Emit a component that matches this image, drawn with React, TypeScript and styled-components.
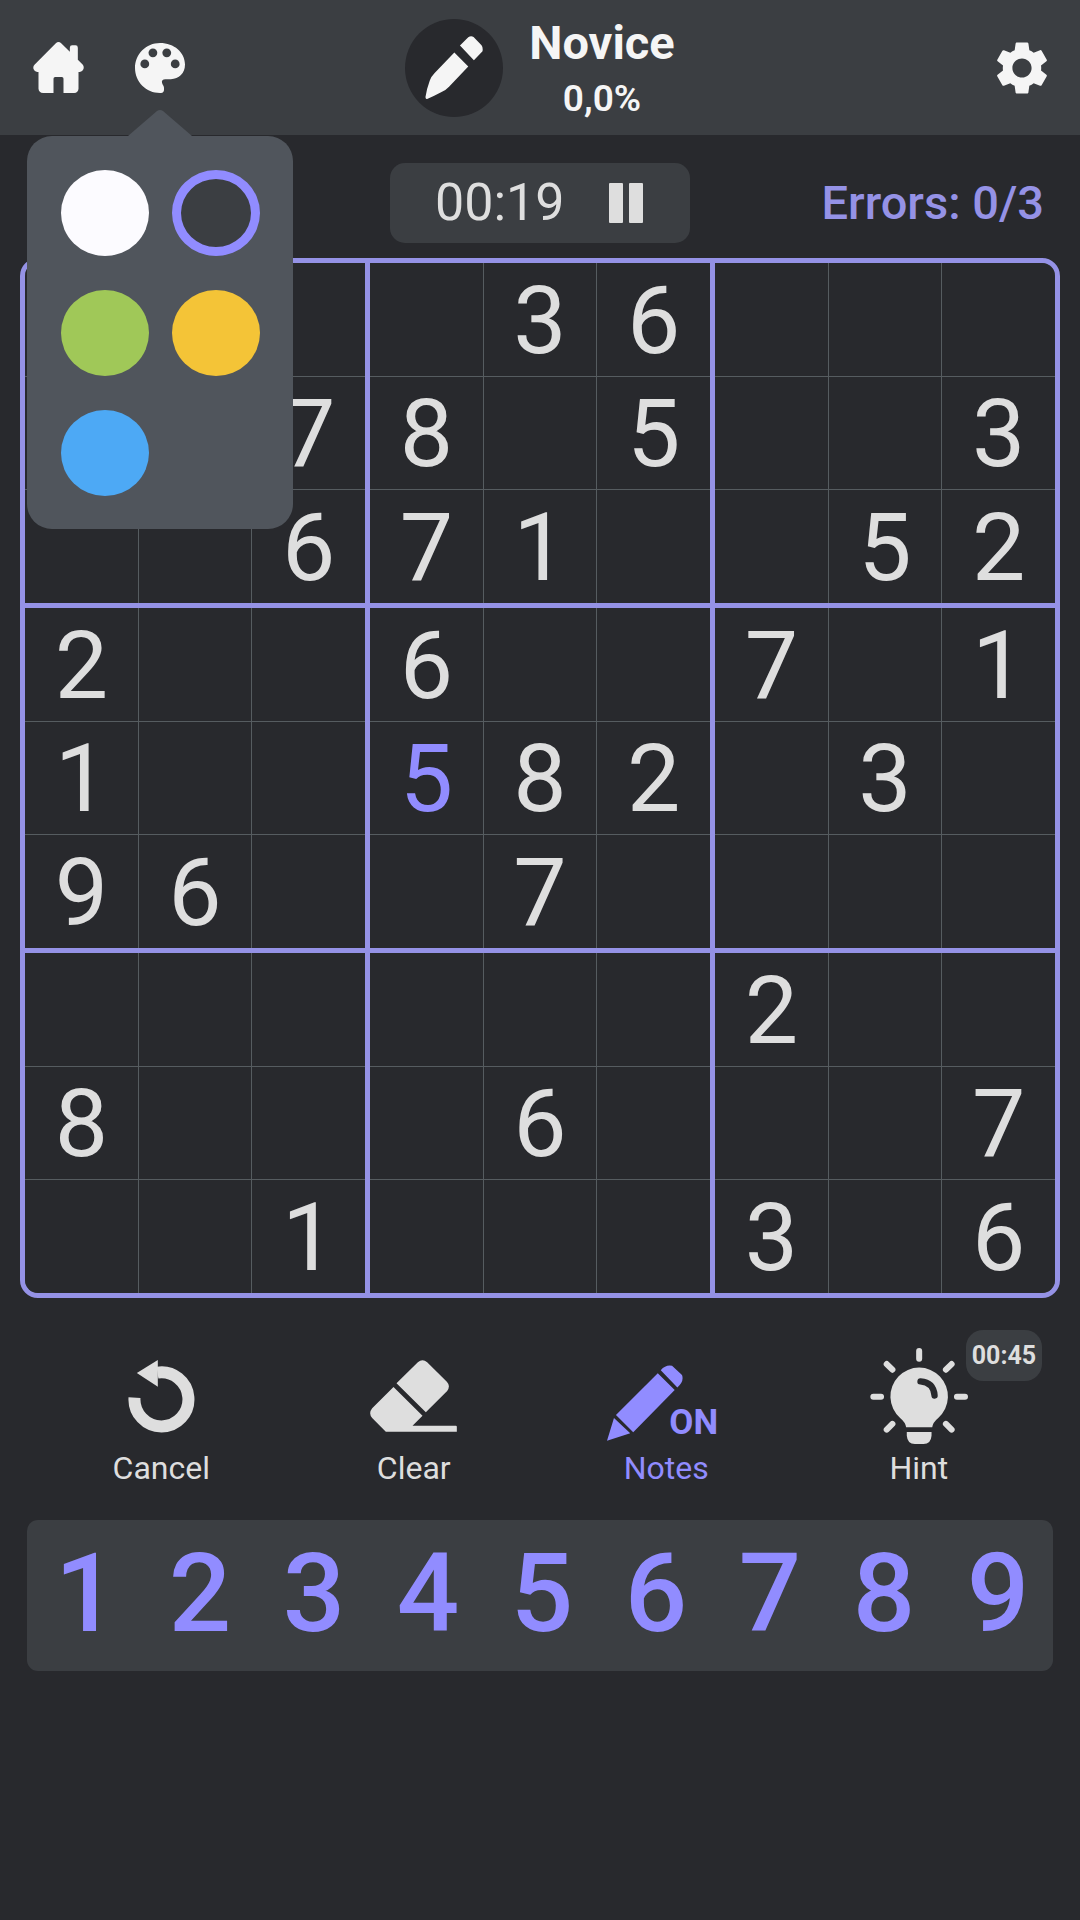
import React, { useState } from "react";
import styled, { createGlobalStyle } from "styled-components";
import { MdSettings } from "react-icons/md";

const color = {
  page: "#28292d",
  panel: "#3b3e42",
  popover: "#50555c",
  line: "#565c60",
  frame: "#9592e6",
  accent: "#918cff",
  text: "#dedede",
  bright: "#f5f5f5",
};

const GlobalStyle = createGlobalStyle`
  * { box-sizing: border-box; }
  html, body, #root { min-height: 100%; }
  body {
    margin: 0;
    background: ${color.page};
    color: ${color.text};
    font-family: Roboto, "Noto Sans", sans-serif;
  }
  button {
    margin: 0;
    padding: 0;
    border: 0;
    background: none;
    color: inherit;
    font: inherit;
    cursor: pointer;
  }
  svg { display: block; }
`;

const Header = styled.header`
  display: grid;
  grid-template-columns: 1fr auto 1fr;
  align-items: center;
  min-height: 135px;
  background: ${color.panel};
`;

const NavGroup = styled.nav`
  display: flex;
  align-items: center;
  gap: 51px;
  padding-left: 33px;
`;

const IconButton = styled.button`
  display: flex;
  align-items: center;
  justify-content: center;
  color: ${color.bright};
`;

const SettingsButton = styled(IconButton)`
  justify-self: end;
  margin-right: 26px;
`;

const ThemeMenu = styled.div`
  position: relative;
`;

const Popover = styled.div`
  position: absolute;
  z-index: 2;
  top: 93px;
  left: 50%;
  transform: translateX(-50%);
  display: grid;
  grid-template-columns: 88px 88px;
  gap: 34px 23px;
  width: 266px;
  padding: 34px 33px 33px 34px;
  border-radius: 25px;
  background: ${color.popover};
`;

const PopoverArrow = styled.svg`
  position: absolute;
  bottom: 100%;
  left: 50%;
  transform: translateX(-50%);
`;

const Swatch = styled.input<{ $fill: string }>`
  appearance: none;
  width: 88px;
  height: 86px;
  margin: 0;
  border-radius: 50%;
  background: ${(p) => p.$fill};
  cursor: pointer;

  &:checked {
    border: 9px solid ${color.accent};
  }
`;

const Level = styled.div`
  display: flex;
  align-items: center;
  gap: 26px;
`;

const LevelBadge = styled.div`
  display: flex;
  align-items: center;
  justify-content: center;
  width: 98px;
  height: 98px;
  border-radius: 50%;
  background: ${color.page};
  color: ${color.bright};
`;

const LevelText = styled.div`
  display: flex;
  flex-direction: column;
  align-items: center;
  padding-top: 7px;
  color: ${color.bright};
`;

const LevelName = styled.h1`
  margin: 0;
  font-size: 47px;
  line-height: 56px;
  font-weight: 700;
`;

const LevelProgress = styled.span`
  font-size: 37px;
  line-height: 56px;
  font-weight: 600;
`;

const Main = styled.main`
  padding: 28px 20px;
`;

const StatusRow = styled.div`
  display: grid;
  grid-template-columns: 1fr auto 1fr;
  align-items: center;
  padding: 0 16px;
`;

const TimerButton = styled.button`
  grid-column: 2;
  display: flex;
  align-items: center;
  justify-content: space-between;
  width: 300px;
  height: 80px;
  padding: 0 47px 0 45px;
  border-radius: 15px;
  background: ${color.panel};
`;

const TimerText = styled.span`
  font-size: 52px;
  line-height: 80px;
`;

const ErrorCount = styled.span`
  justify-self: end;
  color: ${color.frame};
  font-size: 47px;
  line-height: 80px;
  font-weight: 500;
`;

const Board = styled.section`
  display: grid;
  grid-template: repeat(3, 1fr) / repeat(3, 1fr);
  gap: 5px;
  aspect-ratio: 1;
  margin-top: 15px;
  overflow: hidden;
  border: 5px solid ${color.frame};
  border-radius: 18px;
  background: ${color.frame};
`;

const Box = styled.div`
  display: grid;
  grid-template: repeat(3, 1fr) / repeat(3, 1fr);
  gap: 1px;
  background: ${color.line};
`;

const Cell = styled.button<{ $entered?: boolean }>`
  padding-top: 3px;
  background: ${color.page};
  color: ${(p) => (p.$entered ? color.accent : color.text)};
  font-size: 95px;
  line-height: 104px;
`;

const Tools = styled.div`
  display: grid;
  grid-template-columns: repeat(4, 1fr);
  margin-top: 50px;
  padding: 0 15px;
`;

const Tool = styled.button<{ $active?: boolean }>`
  display: flex;
  flex-direction: column;
  align-items: center;
  color: ${(p) => (p.$active ? color.accent : color.text)};
  font-size: 32px;
  line-height: 48px;
`;

const ToolIcon = styled.span`
  position: relative;
  display: flex;
  align-items: center;
  justify-content: center;
  height: 96px;
`;

const NotesIcon = styled(ToolIcon)`
  align-items: flex-end;
  padding: 0 7px 3px 0;
`;

const NotesState = styled.span`
  margin-left: -14px;
  font-size: 35px;
  line-height: 36px;
  font-weight: 700;
`;

const HintTimer = styled.span`
  position: absolute;
  top: -18px;
  left: 96px;
  padding: 0 6px;
  border-radius: 17px;
  background: ${color.panel};
  font-size: 25px;
  line-height: 51px;
  font-weight: 700;
`;

const NumberPad = styled.div`
  display: grid;
  grid-template-columns: repeat(9, 1fr);
  margin: 28px 7px 0;
  border-radius: 11px;
  background: ${color.panel};
`;

const NumberKey = styled.button`
  padding: 0 0 3px 4px;
  color: ${color.accent};
  font-size: 110px;
  line-height: 148px;
  font-weight: 500;
`;

const HomeIcon = () => (
  <svg width="51" height="51" viewBox="0 0 152 153" fill="currentColor" aria-hidden="true">
    <path d="M68 4Q76-4 84 4L110 29V17Q110 10 117 10H127Q134 10 134 17V53L149 68Q153 73 151 81Q148 89 140 90H136V140Q135 152 123 153H91V110Q91 105 86 105H66Q61 105 61 110V153H30Q17 152 16 140V90H12Q4 89 1 81Q-1 73 4 68Z" />
  </svg>
);

const PaletteIcon = () => (
  <svg width="50" height="50" viewBox="0 0 148 148" aria-hidden="true">
    <path
      fill="currentColor"
      d="M74 0C116 0 148 28 148 64C148 90 130 107 106 107H90C82 107 78 112 80 118C81 124 87 127 86 136C86 143 84 148 74 148C33 148 0 115 0 74C0 33 33 0 74 0Z"
    />
    <g fill={color.panel}>
      <circle cx="29" cy="62" r="13" />
      <circle cx="53" cy="29" r="13" />
      <circle cx="94" cy="29" r="13" />
      <circle cx="119" cy="62" r="13" />
    </g>
  </svg>
);

const MarkerIcon = () => (
  <svg width="58" height="63" viewBox="0 0 174 190" fill="currentColor" aria-hidden="true">
    <path d="M88 50L130 92L72 153Q62 164 48 170Q28 181 6 190Q1 191 1 184Q5 158 14 134Q18 122 28 112ZM105 29L130 4Q138-2 146 3L170 28Q175 34 173 46L147 73Z" />
  </svg>
);

const PauseIcon = () => (
  <svg width="34" height="40" viewBox="0 0 34 40" fill="currentColor" aria-hidden="true">
    <rect width="14" height="40" rx="1" />
    <rect x="20" width="14" height="40" rx="1" />
  </svg>
);

const CancelIcon = () => (
  <svg width="67" height="73" viewBox="0 0 200 219" aria-hidden="true">
    <path d="M19 113A81 81 0 1 0 88 38" fill="none" stroke="currentColor" strokeWidth="36" />
    <path d="M89 0L26 39L89 80Z" fill="currentColor" />
  </svg>
);

const EraserIcon = () => (
  <svg width="87" height="72" viewBox="0 0 260 216" fill="currentColor" aria-hidden="true">
    <path d="M79 70L143 7Q157-6 171 7L230 65Q242 78 231 93L167 157ZM70 81L157 167L127 197H257Q260 197 260 200V215H47L6 174Q-6 160 6 145Z" />
  </svg>
);

const PencilIcon = () => (
  <svg width="76" height="76" viewBox="0 0 229 228" fill="currentColor" aria-hidden="true">
    <path d="M162 15Q177-2 196 2L226 30Q233 48 212 67ZM153 24L204 75L79 202L27 150ZM21 159L70 205L0 228Z" />
  </svg>
);

const BulbIcon = () => (
  <svg width="98" height="96" viewBox="0 0 293 287" aria-hidden="true">
    <path
      fill="currentColor"
      d="M108 237Q106 222 90 209A86 86 0 1 1 204 209Q188 222 186 237ZM110 251H184V262Q182 287 160 287H134Q112 287 110 262Z"
    />
    <g fill="none" strokeWidth="19" strokeLinecap="round">
      <path stroke={color.page} d="M151 100Q190 103 193 142" />
      <path
        stroke="currentColor"
        strokeWidth="18"
        d="M147 9V32M10 146H33M260 146H284M50 48L67 65M244 48L227 65M50 244L67 227M244 244L227 227"
      />
    </g>
  </svg>
);

const themes = [
  { name: "White", fill: "#fcfbff" },
  { name: "Dark", fill: "#3b3e42" },
  { name: "Green", fill: "#a0c858" },
  { name: "Yellow", fill: "#f4c437" },
  { name: "Blue", fill: "#4da9f5" },
];

// 0 marks an empty cell.
const puzzle = [
  [0, 0, 0, 0, 3, 6, 0, 0, 0],
  [0, 0, 7, 8, 0, 5, 0, 0, 3],
  [0, 0, 6, 7, 1, 0, 0, 5, 2],
  [2, 0, 0, 6, 0, 0, 7, 0, 1],
  [1, 0, 0, 5, 8, 2, 0, 3, 0],
  [9, 6, 0, 0, 7, 0, 0, 0, 0],
  [0, 0, 0, 0, 0, 0, 2, 0, 0],
  [8, 0, 0, 0, 6, 0, 0, 0, 7],
  [0, 0, 1, 0, 0, 0, 3, 0, 6],
];

const isEntered = (row: number, col: number) => row === 4 && col === 3;

const nine = [0, 1, 2, 3, 4, 5, 6, 7, 8];

const ThemePopover = () => {
  const [theme, setTheme] = useState("Dark");
  return (
    <Popover role="radiogroup" aria-label="Theme">
      <PopoverArrow width="64" height="26" viewBox="0 0 64 26" fill={color.popover} aria-hidden="true">
        <path d="M0 26L29 1Q32-1 35 1L64 26Z" />
      </PopoverArrow>
      {themes.map((t) => (
        <Swatch
          key={t.name}
          type="radio"
          name="theme"
          aria-label={t.name}
          $fill={t.fill}
          checked={theme === t.name}
          onChange={() => setTheme(t.name)}
        />
      ))}
    </Popover>
  );
};

const SudokuBoard = () => (
  <Board aria-label="Sudoku board">
    {nine.map((box) => (
      <Box key={box}>
        {nine.map((i) => {
          const row = Math.floor(box / 3) * 3 + Math.floor(i / 3);
          const col = (box % 3) * 3 + (i % 3);
          const value = puzzle[row][col];
          return (
            <Cell
              key={i}
              $entered={isEntered(row, col)}
              aria-label={`Row ${row + 1}, column ${col + 1}: ${value || "empty"}`}
            >
              {value || null}
            </Cell>
          );
        })}
      </Box>
    ))}
  </Board>
);

export default function App() {
  return (
    <>
      <GlobalStyle />
      <Header>
        <NavGroup>
          <IconButton aria-label="Home">
            <HomeIcon />
          </IconButton>
          <ThemeMenu>
            <IconButton aria-label="Themes" aria-expanded="true">
              <PaletteIcon />
            </IconButton>
            <ThemePopover />
          </ThemeMenu>
        </NavGroup>
        <Level>
          <LevelBadge>
            <MarkerIcon />
          </LevelBadge>
          <LevelText>
            <LevelName>Novice</LevelName>
            <LevelProgress>0,0%</LevelProgress>
          </LevelText>
        </Level>
        <SettingsButton aria-label="Settings">
          <MdSettings size={64} />
        </SettingsButton>
      </Header>
      <Main>
        <StatusRow>
          <TimerButton aria-label="Pause, 00:19">
            <TimerText>00:19</TimerText>
            <PauseIcon />
          </TimerButton>
          <ErrorCount>Errors: 0/3</ErrorCount>
        </StatusRow>
        <SudokuBoard />
        <Tools>
          <Tool>
            <ToolIcon>
              <CancelIcon />
            </ToolIcon>
            Cancel
          </Tool>
          <Tool>
            <ToolIcon>
              <EraserIcon />
            </ToolIcon>
            Clear
          </Tool>
          <Tool $active aria-pressed="true">
            <NotesIcon>
              <PencilIcon />
              <NotesState>ON</NotesState>
            </NotesIcon>
            Notes
          </Tool>
          <Tool>
            <ToolIcon>
              <BulbIcon />
              <HintTimer>00:45</HintTimer>
            </ToolIcon>
            Hint
          </Tool>
        </Tools>
        <NumberPad>
          {nine.map((n) => (
            <NumberKey key={n}>{n + 1}</NumberKey>
          ))}
        </NumberPad>
      </Main>
    </>
  );
}
